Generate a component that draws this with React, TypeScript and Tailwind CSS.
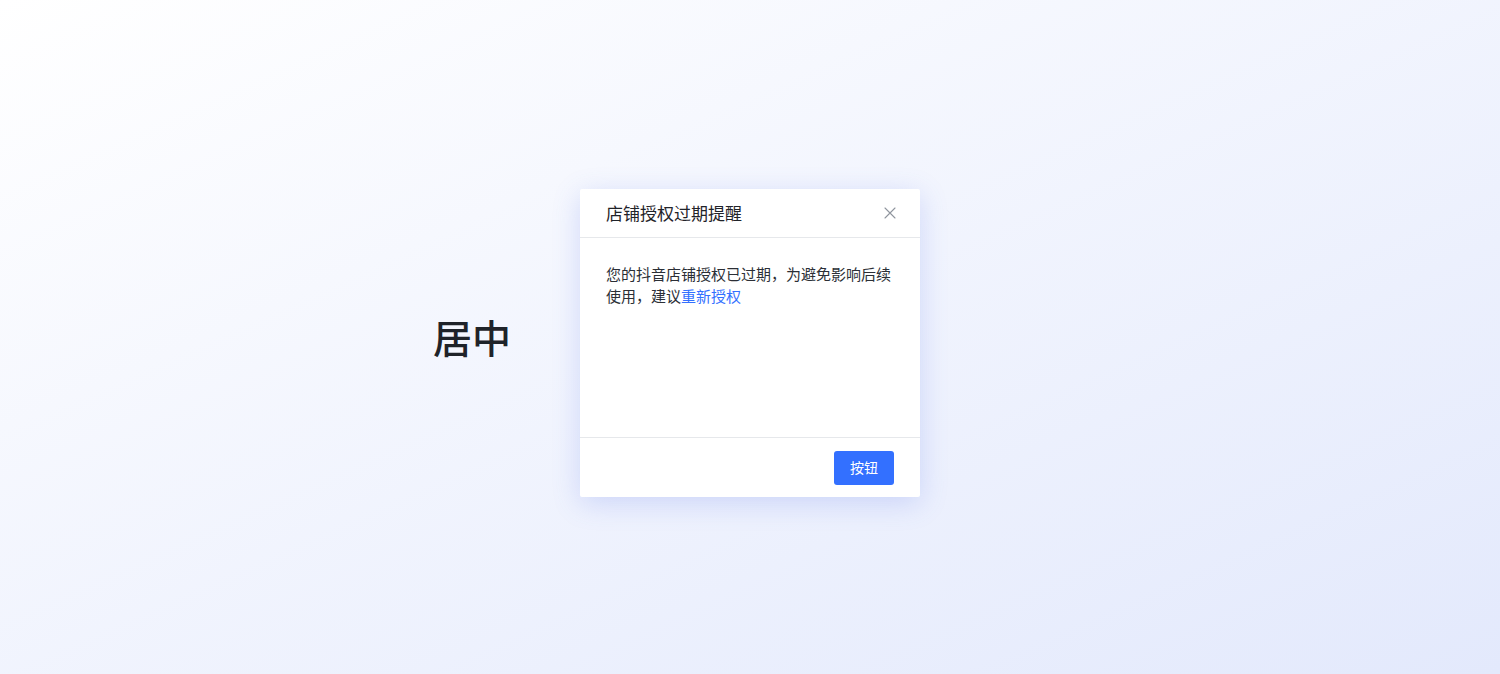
import React from "react";

export default function App() {
  return (
    <div
      className="relative h-[674px] w-full overflow-hidden bg-gradient-to-br from-[#ffffff] to-[#e3e9fc]"
      style={{ fontFamily: '"Noto Sans CJK SC", "Noto Sans", sans-serif' }}
    >
      <div className="flex h-full items-center pl-[433px] pb-[2px]">
        <span className="text-[39px] font-medium leading-none text-[#1f2329]">居中</span>
      </div>
      <div className="absolute left-[580px] top-[189px] flex h-[308px] w-[340px] flex-col rounded-[2px] bg-white shadow-[0_6px_28px_rgba(80,110,230,0.22)]">
        <div className="flex h-[49px] items-center justify-between border-b border-[#e6e8eb] pl-[26px] pr-[24px]">
          <span className="text-[17px] leading-[24px] text-[#1f2329]">店铺授权过期提醒</span>
          <svg width="12" height="12" viewBox="0 0 12 12" className="text-[#8f959e]">
            <path d="M1 1L11 11M11 1L1 11" stroke="currentColor" strokeWidth="1.1" strokeLinecap="round" />
          </svg>
        </div>
        <div className="flex-1 px-[26px] pt-[25px] text-[15px] leading-[22px] text-[#2b2f36]">
          您的抖音店铺授权已过期，为避免影响后续使用，建议<span className="text-[#3370ff]">重新授权</span>
        </div>
        <div className="flex h-[60px] items-center justify-end border-t border-[#e6e8eb] pr-[26px]">
          <button className="h-[34px] w-[60px] rounded-[3px] bg-[#3370ff] text-[14px] text-white">按钮</button>
        </div>
      </div>
    </div>
  );
}
